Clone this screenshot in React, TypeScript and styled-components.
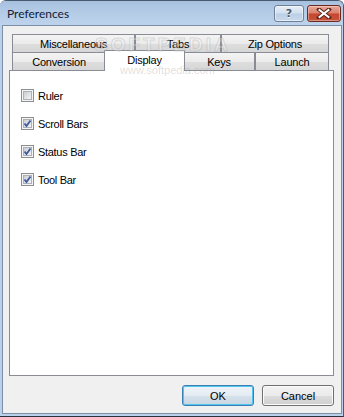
import React from "react";
import styled, { createGlobalStyle, css } from "styled-components";

const Global = createGlobalStyle`
  html, body { margin: 0; padding: 0; background: #ffffff; }
  body { width: 344px; height: 417px; overflow: hidden; }
  * { box-sizing: border-box; }
`;

const Window = styled.div`
  position: relative;
  width: 344px;
  height: 417px;
  display: flex;
  flex-direction: column;
  background: #b9d1ea;
  border-top: 1px solid #4a5a6e;
  border-right: 1px solid #4a5a6e;
  border-bottom: 1px solid #2b3140;
  border-radius: 6px 6px 0 0;
  padding: 0 1px 2px 2px;
  font-family: "Liberation Sans", Arial, sans-serif;
  color: #000;
`;

const TitleBar = styled.div`
  height: 24px;
  margin: 0 -1px 0 -2px;
  padding: 0 2px 0 7px;
  display: flex;
  align-items: center;
  border-radius: 5px 5px 0 0;
  background: linear-gradient(#a6c1df 0%, #b4cbe6 45%, #bdd3ec 100%);
`;

const Title = styled.div`
  flex: 1;
  font-family: Lato, "Liberation Sans", sans-serif;
  font-size: 12px;
  color: #10203a;
  padding-top: 1px;
`;

const CaptionGroup = styled.div`
  display: flex;
  gap: 3px;
  align-self: flex-start;
  margin-top: 4px;
`;

const CaptionButton = styled.div<{ $close?: boolean }>`
  height: 17px;
  width: ${(p) => (p.$close ? 34 : 30)}px;
  border-radius: 3px;
  display: flex;
  align-items: center;
  justify-content: center;
  ${(p) =>
    p.$close
      ? css`
          border: 1px solid #6b2b22;
          background: linear-gradient(#e8aa9c 0%, #d98370 45%, #c7472f 55%, #c4533b 100%);
          box-shadow: inset 0 0 0 1px rgba(255, 220, 210, 0.45);
        `
      : css`
          border: 1px solid #6f8096;
          background: linear-gradient(#e6eef8 0%, #d3e0ef 45%, #bccfe6 55%, #c9d9ec 100%);
          box-shadow: inset 0 0 0 1px rgba(255, 255, 255, 0.5);
        `}
`;

const HelpGlyph = styled.span`
  font-family: "DejaVu Sans", sans-serif;
  font-weight: bold;
  font-size: 11px;
  line-height: 11px;
  color: #4a5a70;
  text-shadow: 0 1px 0 rgba(255, 255, 255, 0.8);
`;

const Client = styled.div`
  flex: 1;
  display: flex;
  flex-direction: column;
  background: #f0f0f0;
  border: 1px solid #7d8fa6;
  padding: 8px 7px 7px 6px;
`;

const TabStrip = styled.div`
  display: flex;
  flex-direction: column;
  margin-left: 3px;
  width: 317px;
`;

const TabRow = styled.div`
  display: flex;
  height: 18px;
`;

const Tab = styled.div<{ $w: number; $selected?: boolean }>`
  width: ${(p) => p.$w}px;
  height: 18px;
  flex: none;
  display: flex;
  align-items: center;
  justify-content: center;
  font-size: 11px;
  letter-spacing: -0.2px;
  border: 1px solid #898c95;
  border-bottom: none;
  background: linear-gradient(#f4f4f4 0%, #ebebeb 50%, #dedede 51%, #d6d6d6 100%);
  padding-top: 1px;
  ${(p) =>
    p.$selected &&
    css`
      position: relative;
      z-index: 2;
      width: ${p.$w + 4}px;
      height: 21px;
      margin: -2px -2px -1px -2px;
      background: #ffffff;
      padding-top: 0;
      padding-bottom: 3px;
    `}
`;

const Panel = styled.div`
  flex: 1;
  background: #ffffff;
  border: 1px solid #898c95;
  display: flex;
  flex-direction: column;
  gap: 15px;
  padding: 18px 0 0 11px;
`;

const CheckRow = styled.label`
  display: flex;
  align-items: center;
  gap: 4px;
  height: 13px;
  font-size: 11px;
  letter-spacing: -0.3px;
`;

const CheckBox = styled.span`
  width: 13px;
  height: 13px;
  flex: none;
  border: 1px solid #8e8f8f;
  background: #f4f4f4;
  padding: 1px;
  display: flex;
`;

const CheckInner = styled.span`
  flex: 1;
  position: relative;
  background: linear-gradient(135deg, #c9ccd2 0%, #dfe1e4 50%, #f3f3f3 100%);
  border: 1px solid #aeb1b7;
`;

const CheckMark = styled.svg`
  position: absolute;
  left: -2px;
  top: -2px;
`;

const ButtonRow = styled.div`
  display: flex;
  justify-content: flex-end;
  gap: 8px;
  margin-top: 9px;
`;

const Button = styled.div<{ $default?: boolean }>`
  width: 72px;
  height: 21px;
  border-radius: 3px;
  display: flex;
  align-items: center;
  justify-content: center;
  font-size: 11px;
  ${(p) =>
    p.$default
      ? css`
          border: 1px solid #3c7fb1;
          box-shadow: inset 0 0 0 1px #4fc6f2;
          background: linear-gradient(#eef3f8 0%, #e4ecf3 50%, #d5e1eb 51%, #c9d7e3 100%);
        `
      : css`
          border: 1px solid #707070;
          box-shadow: inset 0 0 0 1px #fbfbfb;
          background: linear-gradient(#f2f2f2 0%, #ebebeb 50%, #dddddd 51%, #cfcfcf 100%);
        `}
`;

const WatermarkBig = styled.div`
  position: absolute;
  left: 95px;
  top: 33px;
  font-family: "Liberation Sans", Arial, sans-serif;
  font-weight: bold;
  font-size: 19px;
  letter-spacing: 3px;
  color: rgba(255, 255, 255, 0.3);
  -webkit-text-stroke: 1px rgba(150, 150, 150, 0.3);
  pointer-events: none;
  z-index: 5;
`;

const WatermarkSmall = styled.div`
  position: absolute;
  left: 120px;
  top: 63px;
  font-family: "Liberation Sans", Arial, sans-serif;
  font-size: 11px;
  color: rgba(140, 140, 140, 0.28);
  pointer-events: none;
  z-index: 5;
`;

const CloseIcon = () => (
  <svg width="16" height="11" viewBox="0 0 16 11">
    <path d="M3 1.5 L13 9.5 M13 1.5 L3 9.5" stroke="#5b2018" strokeWidth="4" strokeLinecap="square" />
    <path d="M3.5 2 L12.5 9 M12.5 2 L3.5 9" stroke="#ffffff" strokeWidth="2" strokeLinecap="square" />
  </svg>
);

const Check = ({ checked }: { checked: boolean }) => (
  <CheckBox>
    <CheckInner>
      {checked && (
        <CheckMark width="11" height="11" viewBox="0 0 11 11">
          <path d="M2.5 5.5 L4.5 8 L8.5 2.5" fill="none" stroke="#3d5a9e" strokeWidth="1.8" />
        </CheckMark>
      )}
    </CheckInner>
  </CheckBox>
);

const backRow = [
  { label: "Miscellaneous", w: 123 },
  { label: "Tabs", w: 86 },
  { label: "Zip Options", w: 108 },
];

const frontRow = [
  { label: "Conversion", w: 94 },
  { label: "Display", w: 77, selected: true },
  { label: "Keys", w: 72 },
  { label: "Launch", w: 74 },
];

const options = [
  { label: "Ruler", checked: false },
  { label: "Scroll Bars", checked: true },
  { label: "Status Bar", checked: true },
  { label: "Tool Bar", checked: true },
];

export default function App() {
  return (
    <>
      <Global />
      <Window>
        <TitleBar>
          <Title>Preferences</Title>
          <CaptionGroup>
            <CaptionButton>
              <HelpGlyph>?</HelpGlyph>
            </CaptionButton>
            <CaptionButton $close>
              <CloseIcon />
            </CaptionButton>
          </CaptionGroup>
        </TitleBar>
        <Client>
          <TabStrip>
            <TabRow>
              {backRow.map((t) => (
                <Tab key={t.label} $w={t.w}>
                  {t.label}
                </Tab>
              ))}
            </TabRow>
            <TabRow>
              {frontRow.map((t) => (
                <Tab key={t.label} $w={t.w} $selected={t.selected}>
                  {t.label}
                </Tab>
              ))}
            </TabRow>
          </TabStrip>
          <Panel>
            {options.map((o) => (
              <CheckRow key={o.label}>
                <Check checked={o.checked} />
                {o.label}
              </CheckRow>
            ))}
          </Panel>
          <ButtonRow>
            <Button $default>OK</Button>
            <Button>Cancel</Button>
          </ButtonRow>
        </Client>
        <WatermarkBig>SOFTPEDIA</WatermarkBig>
        <WatermarkSmall>www.softpedia.com</WatermarkSmall>
      </Window>
    </>
  );
}
